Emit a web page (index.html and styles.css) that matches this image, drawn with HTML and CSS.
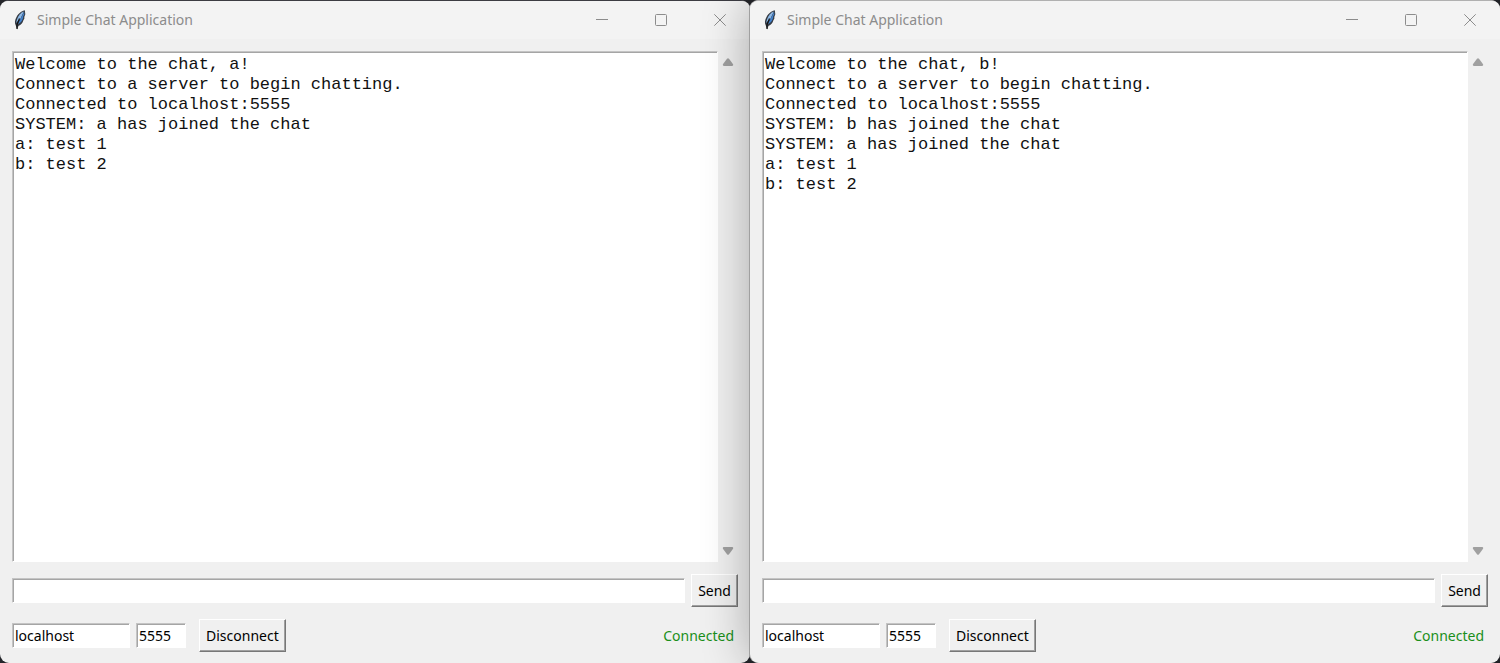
FILE: index.html
```html
<!DOCTYPE html>
<html lang="en">
<head>
<meta charset="utf-8">
<title>Simple Chat Application</title>
<link rel="stylesheet" href="styles.css">
</head>
<body>
<svg class="defs" aria-hidden="true">
  <symbol id="feather" viewBox="0 0 12 20">
    <path d="M10.8 .3C8.500 .6 4.600 3.200 2.500 7C.8 10.200 .4 13 1.700 15.300L3.200 19.600L4.400 16C7 15 8.700 12.800 9.300 10.500L10.400 8.500L10.300 7L11.300 4.300Z" fill="#353b44"/>
    <path d="M9.900 1.600C7 2.600 4.400 5.600 3.200 9L2 13L6.500 8.500Z" fill="#8db9e8"/>
    <path d="M10.100 2L3.900 14C6 13.600 7.900 11.700 8.400 9.600L9.200 7.700L9 6.700L10.300 4.300Z" fill="#4180cc"/>
    <path d="M5.500 8.500L3 14.500V19" stroke="#111" stroke-width="1.200" fill="none"/>
  </symbol>
  <symbol id="minimize" viewBox="0 0 12 12"><path d="M0 5.500H12" stroke="currentColor"/></symbol>
  <symbol id="maximize" viewBox="0 0 12 12"><rect x=".5" y=".5" width="11" height="11" rx="1" fill="none" stroke="currentColor"/></symbol>
  <symbol id="close" viewBox="0 0 12 12"><path d="M.3 .3L11.700 11.700M11.700 .3L.3 11.700" fill="none" stroke="currentColor"/></symbol>
  <symbol id="arrow" viewBox="0 0 12 8"><path d="M5 .8Q6-.2 7 .8L10.900 6Q11.700 7.900 10.200 7.900H1.800Q.3 7.900 1.100 6Z" fill="#a0a0a0"/></symbol>
</svg>
<main class="desktop">
  <section class="window">
    <header class="titlebar">
      <svg class="app-icon"><use href="#feather"/></svg>
      <h1 class="title">Simple Chat Application</h1>
      <button class="caption-button" aria-label="Minimize"><svg><use href="#minimize"/></svg></button>
      <button class="caption-button" aria-label="Maximize"><svg><use href="#maximize"/></svg></button>
      <button class="caption-button" aria-label="Close"><svg><use href="#close"/></svg></button>
    </header>
    <div class="content">
      <div class="history">
        <textarea class="log sunken" aria-label="Chat history" readonly>Welcome to the chat, a!
Connect to a server to begin chatting.
Connected to localhost:5555
SYSTEM: a has joined the chat
a: test 1
b: test 2</textarea>
        <div class="scrollbar">
          <button class="scroll-button" aria-label="Scroll up"><svg><use href="#arrow"/></svg></button>
          <button class="scroll-button scroll-down" aria-label="Scroll down"><svg><use href="#arrow"/></svg></button>
        </div>
      </div>
      <form class="row">
        <input class="entry sunken message" type="text" aria-label="Message">
        <button class="push" type="button">Send</button>
      </form>
      <form class="row connection">
        <input class="entry sunken host" type="text" aria-label="Host" value="localhost">
        <input class="entry sunken port" type="text" aria-label="Port" value="5555">
        <button class="push disconnect" type="button">Disconnect</button>
        <output class="status">Connected</output>
      </form>
    </div>
  </section>
  <section class="window front">
    <header class="titlebar">
      <svg class="app-icon"><use href="#feather"/></svg>
      <h1 class="title">Simple Chat Application</h1>
      <button class="caption-button" aria-label="Minimize"><svg><use href="#minimize"/></svg></button>
      <button class="caption-button" aria-label="Maximize"><svg><use href="#maximize"/></svg></button>
      <button class="caption-button" aria-label="Close"><svg><use href="#close"/></svg></button>
    </header>
    <div class="content">
      <div class="history">
        <textarea class="log sunken" aria-label="Chat history" readonly>Welcome to the chat, b!
Connect to a server to begin chatting.
Connected to localhost:5555
SYSTEM: b has joined the chat
SYSTEM: a has joined the chat
a: test 1
b: test 2</textarea>
        <div class="scrollbar">
          <button class="scroll-button" aria-label="Scroll up"><svg><use href="#arrow"/></svg></button>
          <button class="scroll-button scroll-down" aria-label="Scroll down"><svg><use href="#arrow"/></svg></button>
        </div>
      </div>
      <form class="row">
        <input class="entry sunken message" type="text" aria-label="Message">
        <button class="push" type="button">Send</button>
      </form>
      <form class="row connection">
        <input class="entry sunken host" type="text" aria-label="Host" value="localhost">
        <input class="entry sunken port" type="text" aria-label="Port" value="5555">
        <button class="push disconnect" type="button">Disconnect</button>
        <output class="status">Connected</output>
      </form>
    </div>
  </section>
</main>
</body>
</html>
```
FILE: styles.css
```css
* {
  box-sizing: border-box;
}

body {
  margin: 0;
  background: #25262b;
  color: #000;
  font: 14px/20px "Noto Sans", "Open Sans", sans-serif;
}

button,
input {
  font: inherit;
  color: inherit;
}

.defs {
  position: absolute;
  width: 0;
  height: 0;
}

.desktop {
  display: grid;
  grid-template-columns: 1fr 1fr;
  min-height: 100vh;
  overflow: hidden;
}

.window {
  display: flex;
  flex-direction: column;
  min-width: 0;
  border-top: 1px solid #3c3c42;
  border-radius: 9px;
  background: #f0f0f0;
}

.front {
  z-index: 1;
  border-top-color: #b0b0b0;
  box-shadow: -1px 0 0 #a0a0a0, 0 0 48px rgba(0, 0, 0, 0.32);
}

.titlebar {
  display: flex;
  align-items: center;
  height: 38px;
  padding: 0 1px 0 14px;
  border-radius: 8px 8px 0 0;
  background: #f3f3f3;
  color: #8c8c8c;
}

.app-icon {
  width: 12px;
  height: 20px;
}

.title {
  flex: 1;
  margin: 0 0 0 11px;
  font-size: 14px;
  font-weight: 400;
}

.caption-button {
  display: grid;
  place-items: center;
  width: 59px;
  height: 38px;
  padding: 0;
  border: 0;
  background: none;
}

.caption-button svg {
  width: 12px;
  height: 12px;
}

.content {
  display: flex;
  flex: 1;
  flex-direction: column;
  gap: 12px;
  padding: 12px 12px 11px;
}

.history {
  display: flex;
  flex: 1;
}

.sunken {
  border: 1px solid;
  border-color: #c4c4c4 #fff #fff #c4c4c4;
  border-radius: 0;
  background: #fff;
  box-shadow: inset 1px 1px 0 #a5a5a5;
  outline: 0;
}

.log {
  flex: 1;
  min-width: 0;
  padding: 3px 2px 1px;
  color: #111;
  font: 17px/20px "Liberation Mono", monospace;
  resize: none;
}

.scrollbar {
  display: flex;
  flex-direction: column;
  justify-content: space-between;
  width: 20px;
}

.scroll-button {
  display: grid;
  place-items: center;
  height: 22px;
  padding: 0;
  border: 0;
  background: none;
}

.scroll-button svg {
  width: 12px;
  height: 8px;
}

.scroll-down svg {
  transform: rotate(180deg);
}

.row {
  display: flex;
  align-items: center;
  gap: 6px;
}

.entry {
  height: 25px;
  padding: 0 2px;
}

.message {
  flex: 1;
  min-width: 0;
}

.host {
  width: 118px;
}

.port {
  width: 50px;
}

.push {
  height: 33px;
  padding: 0 6px;
  border: 1px solid;
  border-color: #fff #777 #777 #fff;
  border-radius: 0;
  background: #f0f0f0;
  box-shadow: inset -1px -1px 0 #a0a0a0;
}

.disconnect {
  margin-left: 7px;
}

.status {
  margin-left: auto;
  padding-right: 4px;
  color: #1a8f1a;
}
```
